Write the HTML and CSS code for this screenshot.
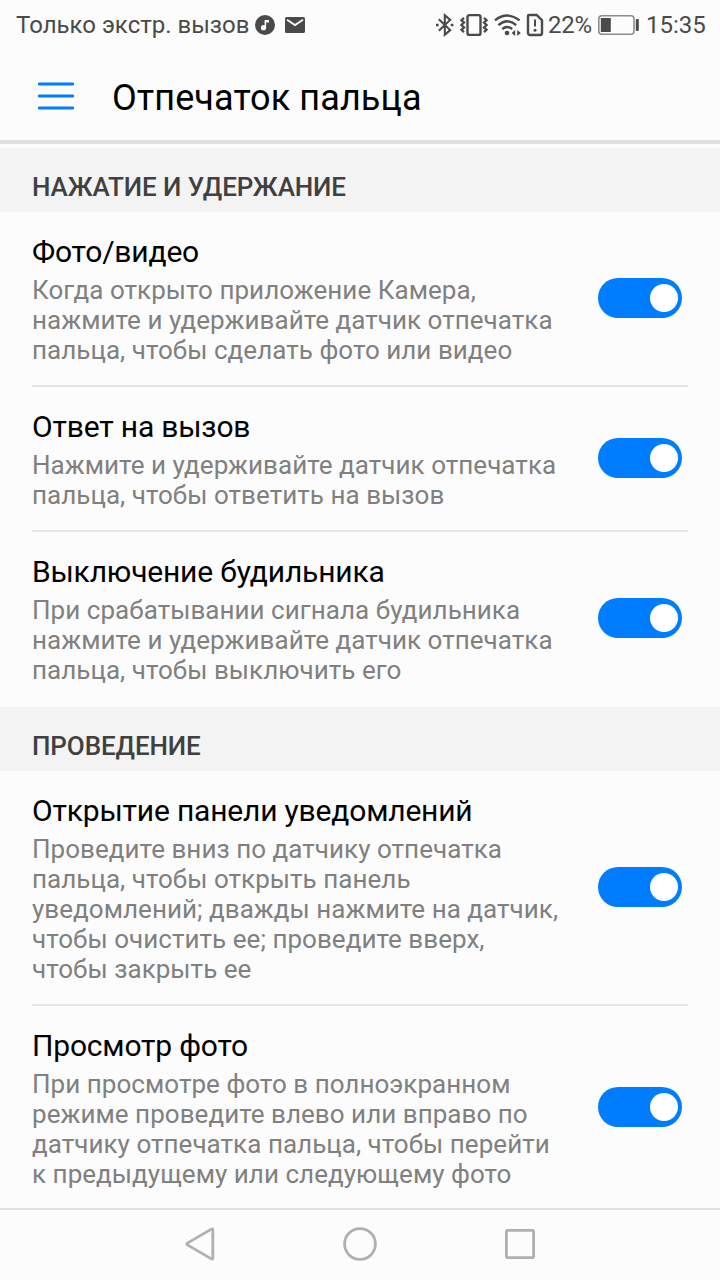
FILE: index.html
```html
<!DOCTYPE html>
<html lang="ru">
<head>
  <meta charset="UTF-8">
  <meta name="viewport" content="width=device-width, initial-scale=1.0">
  <title>Отпечаток пальца</title>
  <link rel="stylesheet" href="styles.css">
</head>
<body>

  <div class="status-bar">
    <span class="carrier">Только экстр. вызов</span>
    <svg class="icon-music" width="20" height="20" viewBox="0 0 20 20">
      <circle cx="10" cy="10" r="10" fill="#4a4a4a"/>
      <circle cx="8.5" cy="12.7" r="2.6" fill="#fcfcfc"/>
      <path d="M9.6 5H14v2.4h-2.9v5.3H9.6z" fill="#fcfcfc"/>
    </svg>
    <svg class="icon-mail" width="20" height="16" viewBox="0 0 20 16">
      <rect width="20" height="16" rx="1.6" fill="#4a4a4a"/>
      <path d="M2 2.8l8 5.2 8-5.2" fill="none" stroke="#fcfcfc" stroke-width="1.9"/>
    </svg>

    <svg class="icon-bluetooth" width="18" height="24" viewBox="0 0 18 24">
      <path d="M2.8 6.2l11.4 10.9-5.4 4.6V2.3l5.4 4.6L2.8 17.8" fill="none" stroke="#4a4a4a" stroke-width="2.1"/>
      <path d="M0 12h2.6M14.8 12h2.6" stroke="#4a4a4a" stroke-width="2.6"/>
    </svg>
    <svg class="icon-vibrate" width="28" height="24" viewBox="0 0 28 24">
      <rect x="7.5" y="2.1" width="13" height="19.8" rx="2" fill="none" stroke="#4a4a4a" stroke-width="2.4"/>
      <path d="M4 4.8L1.4 7.2 4 9.6 1.4 12 4 14.4 1.4 16.8 4 19.2M24 4.8l2.6 2.4L24 9.6l2.6 2.4-2.6 2.4 2.6 2.4-2.6 2.4" fill="none" stroke="#4a4a4a" stroke-width="2.3"/>
    </svg>
    <svg class="icon-wifi" width="27" height="24" viewBox="0 0 27 24">
      <path d="M1 7.4Q13 -2.2 25.6 7.4M4.4 12.2Q13.2 4.4 22.2 12.2M8.3 16Q13.2 12 18.2 16" fill="none" stroke="#4a4a4a" stroke-width="2.4"/>
      <circle cx="13" cy="20" r="2.3" fill="#4a4a4a"/>
      <path d="M17.6 20l3.6-3v6zM26.8 20l-3.6-3v6z" fill="#4a4a4a"/>
    </svg>
    <svg class="icon-sim" width="18" height="24" viewBox="0 0 18 24">
      <path d="M3 2h7.6L16 7.2V20a2 2 0 0 1-2 2H4a2 2 0 0 1-2-2V3a1 1 0 0 1 1-1z" fill="none" stroke="#4a4a4a" stroke-width="2.4"/>
      <path d="M9 6.6v7" stroke="#4a4a4a" stroke-width="2"/>
      <circle cx="9" cy="17.2" r="1.5" fill="#4a4a4a"/>
    </svg>
    <span class="percent">22%</span>
    <svg class="icon-battery" width="41" height="20" viewBox="0 0 41 20">
      <rect x=".8" y=".8" width="35.2" height="18.4" rx="3" fill="none" stroke="#8c8c8c" stroke-width="1.6"/>
      <rect x="2.8" y="3" width="10" height="14" fill="#4a4a4a"/>
      <rect x="37.8" y="4" width="3" height="12" rx="1" fill="#4a4a4a"/>
    </svg>
    <span class="clock">15:35</span>
  </div>

  <header class="header">
    <svg class="menu" width="36" height="28" viewBox="0 0 36 28">
      <path d="M1.2 2h33.6M1.2 14h33.6M1.2 26h33.6" stroke="#007dff" stroke-width="2.8" stroke-linecap="round"/>
    </svg>
    <h1>Отпечаток пальца</h1>
  </header>

  <main class="settings">
    <h2>НАЖАТИЕ И УДЕРЖАНИЕ</h2>
    <div class="row">
      <div class="text">
        <h3>Фото/видео</h3>
        <p>Когда открыто приложение Камера, нажмите и удерживайте датчик отпечатка пальца, чтобы сделать фото или видео</p>
      </div>
      <span class="switch"></span>
    </div>
    <div class="row">
      <div class="text">
        <h3>Ответ на вызов</h3>
        <p>Нажмите и удерживайте датчик отпечатка пальца, чтобы ответить на вызов</p>
      </div>
      <span class="switch"></span>
    </div>
    <div class="row last">
      <div class="text">
        <h3>Выключение будильника</h3>
        <p>При срабатывании сигнала будильника нажмите и удерживайте датчик отпечатка пальца, чтобы выключить его</p>
      </div>
      <span class="switch"></span>
    </div>

    <h2>ПРОВЕДЕНИЕ</h2>
    <div class="row">
      <div class="text">
        <h3>Открытие панели уведомлений</h3>
        <p>Проведите вниз по датчику отпечатка пальца, чтобы открыть панель уведомлений; дважды нажмите на датчик, чтобы очистить ее; проведите вверх, чтобы закрыть ее</p>
      </div>
      <span class="switch"></span>
    </div>
    <div class="row last">
      <div class="text">
        <h3>Просмотр фото</h3>
        <p>При просмотре фото в полноэкранном режиме проведите влево или вправо по датчику отпечатка пальца, чтобы перейти к предыдущему или следующему фото</p>
      </div>
      <span class="switch"></span>
    </div>
  </main>

  <nav class="nav-bar">
    <svg width="36" height="36" viewBox="0 0 36 36">
      <path d="M29.4 3.1Q30.8 2.3 30.8 3.9V32.1Q30.8 33.7 29.4 32.9L5.4 18.9Q4.2 18 5.4 17.1Z"/>
    </svg>
    <svg width="36" height="36" viewBox="0 0 36 36">
      <circle cx="18" cy="18" r="15.4"/>
    </svg>
    <svg width="36" height="36" viewBox="0 0 36 36">
      <rect x="4.4" y="4.4" width="27.2" height="27.2" rx="1.5"/>
    </svg>
  </nav>

</body>
</html>
```

FILE: styles.css
```css
* { margin: 0; padding: 0; box-sizing: border-box; }
body {
  width: 720px;
  height: 1280px;
  display: flex;
  flex-direction: column;
  overflow: hidden;
  font-family: Roboto, sans-serif;
  background-color: #fcfcfc;
  color: #000;
}
svg {
  flex: none;
}
.status-bar {
  height: 50px;
  padding: 0 15px 0 16px;
  display: flex;
  align-items: center;
  font-size: 24px;
  color: #4a4a4a;
  white-space: nowrap;
}
.carrier {
  width: 234px;
}
.icon-music {
  margin-left: 5px;
}
.icon-mail {
  margin-left: 10px;
}
.icon-bluetooth {
  margin-left: auto;
}
.icon-vibrate {
  margin-left: 6px;
}
.icon-wifi {
  margin-left: 6px;
}
.icon-sim {
  margin-left: 5px;
}
.percent {
  width: 45px;
  margin-left: 4px;
  letter-spacing: -0.2px;
}
.icon-battery {
  margin-left: 5px;
}
.clock {
  width: 59px;
  margin-left: 7px;
}
.header {
  height: 94px;
  padding: 2px 38px 0;
  display: flex;
  align-items: center;
  gap: 38px;
  border-bottom: 4px solid #e0e0e0;
}
h1 {
  padding-top: 4px;
  font-size: 36px;
  font-weight: 400;
  line-height: 42px;
  letter-spacing: 0.1px;
}
.settings {
  flex: 1;
  min-height: 0;
  padding-top: 4px;
  overflow: hidden;
}
h2 {
  height: 64px;
  padding: 24px 32px 0;
  background: #f3f3f3;
  color: #404040;
  font-size: 26px;
  font-weight: 500;
  line-height: 30px;
  letter-spacing: -0.1px;
}
.row {
  margin: 0 32px;
  padding: 22px 6px 20px 0;
  display: flex;
  justify-content: space-between;
  align-items: center;
  border-bottom: 2px solid #e5e5e5;
}
.row.last {
  border-bottom-color: transparent;
}
.text {
  width: 530px;
}
h3 {
  margin-bottom: 6px;
  font-size: 30px;
  font-weight: 400;
  line-height: 35px;
  letter-spacing: -0.18px;
}
p {
  color: #808080;
  font-size: 26px;
  line-height: 30px;
  letter-spacing: 0.04px;
}
.switch {
  width: 84px;
  height: 40px;
  margin-bottom: 3px;
  padding: 6px 4px;
  display: flex;
  justify-content: flex-end;
  border-radius: 20px;
  background: #007dff;
}
.switch::after {
  content: "";
  width: 28px;
  height: 28px;
  border-radius: 50%;
  background: #fff;
}
.nav-bar {
  height: 72px;
  padding-bottom: 2px;
  display: flex;
  justify-content: center;
  align-items: center;
  gap: 124px;
  border-top: 2px solid #e0e0e0;
}
.nav-bar svg {
  fill: none;
  stroke: #b0b0b0;
  stroke-width: 2.8;
}
```
